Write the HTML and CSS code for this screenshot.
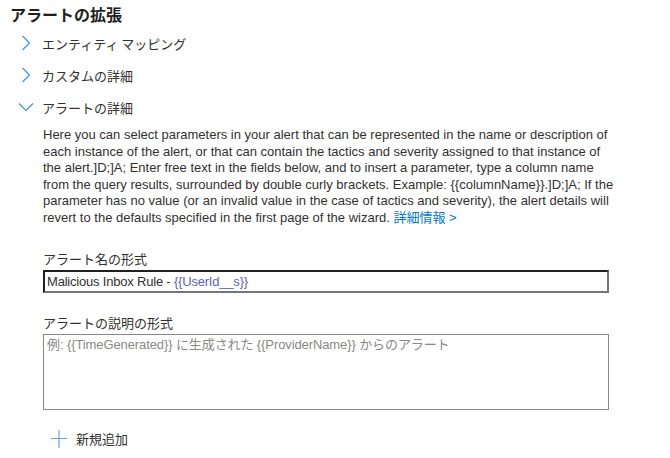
FILE: index.html
```html
<!DOCTYPE html>
<html lang="ja">
<head>
<meta charset="utf-8">
<link rel="stylesheet" href="styles.css">
</head>
<body>
<div class="page">
  <h1 class="title">アラートの拡張</h1>
  <div class="row">
    <svg class="chev" width="16" height="16" viewBox="0 0 16 16"><path d="M4.5 1 L11.5 8 L4.5 15" fill="none" stroke="#3b8ee0" stroke-width="1.1"/></svg>
    <span>エンティティ マッピング</span>
  </div>
  <div class="row">
    <svg class="chev" width="16" height="16" viewBox="0 0 16 16"><path d="M4.5 1 L11.5 8 L4.5 15" fill="none" stroke="#3b8ee0" stroke-width="1.1"/></svg>
    <span>カスタムの詳細</span>
  </div>
  <div class="row">
    <svg class="chev" width="16" height="16" viewBox="0 0 16 16"><path d="M1 4.5 L8 11.5 L15 4.5" fill="none" stroke="#3b8ee0" stroke-width="1.1"/></svg>
    <span>アラートの詳細</span>
  </div>
  <div class="body">
    <p class="desc">Here you can select parameters in your alert that can be represented in the name or description of each instance of the alert, or that can contain the tactics and severity assigned to that instance of the alert.]D;]A; Enter free text in the fields below, and to insert a parameter, type a column name from the query results, surrounded by double curly brackets. Example: {{columnName}}.]D;]A; If the parameter has no value (or an invalid value in the case of tactics and severity), the alert details will revert to the defaults specified in the first page of the wizard. <a class="link" href="#">詳細情報 &gt;</a></p>
    <div class="field">
      <div class="label">アラート名の形式</div>
      <div class="input">Malicious Inbox Rule - <span class="param">{{UserId__s}}</span></div>
    </div>
    <div class="field">
      <div class="label">アラートの説明の形式</div>
      <div class="textarea"><span class="placeholder">例: {{TimeGenerated}} に生成された {{ProviderName}} からのアラート</span></div>
    </div>
    <div class="add">
      <svg width="16" height="18" viewBox="0 0 16 18"><path d="M8 0 V18 M0 8.5 H16" fill="none" stroke="#6f9fe0" stroke-width="1.2"/></svg>
      <span>新規追加</span>
    </div>
  </div>
</div>
</body>
</html>
```
FILE: styles.css
```css
html, body {
  margin: 0;
  padding: 0;
  background: #ffffff;
}
.page {
  width: 670px;
  height: 458px;
  font-family: "Liberation Sans", "Noto Sans CJK JP", sans-serif;
  color: #323130;
  overflow: hidden;
}
.title {
  margin: 0;
  padding: 3px 0 0 10px;
  font-family: "Noto Sans CJK JP", sans-serif;
  font-size: 16px;
  font-weight: 700;
  line-height: 22px;
  height: 24px;
  color: #201f1e;
}
.row {
  display: flex;
  align-items: center;
  height: 32px;
  padding-left: 18px;
  gap: 8px;
  font-family: "Noto Sans CJK JP", sans-serif;
  font-size: 13px;
}
.chev {
  flex: none;
}
.body {
  padding-left: 43px;
}
.desc {
  margin: 4px 0 0;
  width: 572px;
  font-size: 13px;
  line-height: 16.6px;
  color: #323130;
}
.link {
  color: #0078d4;
  text-decoration: none;
}
.field {
  display: flex;
  flex-direction: column;
  gap: 2px;
  width: 566px;
}
.field + .field {
  margin-top: 21px;
}
.desc + .field {
  margin-top: 23px;
}
.label {
  font-family: "Noto Sans CJK JP", sans-serif;
  font-size: 13px;
  line-height: 18px;
}
.input {
  box-sizing: border-box;
  height: 23px;
  border: 2px solid #767676;
  border-top-color: #1f1f1f;
  border-left-color: #1f1f1f;
  padding: 0 2px;
  font-size: 13px;
  letter-spacing: -0.2px;
  line-height: 19px;
  color: #323130;
}
.param {
  color: #5b5fc7;
}
.textarea {
  box-sizing: border-box;
  height: 76px;
  border: 1px solid #8a8886;
  padding: 1px 3px;
  font-size: 13px;
  letter-spacing: -0.1px;
  line-height: 18px;
}
.placeholder {
  color: #8a8886;
}
.add {
  display: flex;
  align-items: center;
  gap: 9px;
  margin-top: 20px;
  padding-left: 8px;
  height: 18px;
  font-family: "Noto Sans CJK JP", sans-serif;
  font-size: 13px;
}
```
